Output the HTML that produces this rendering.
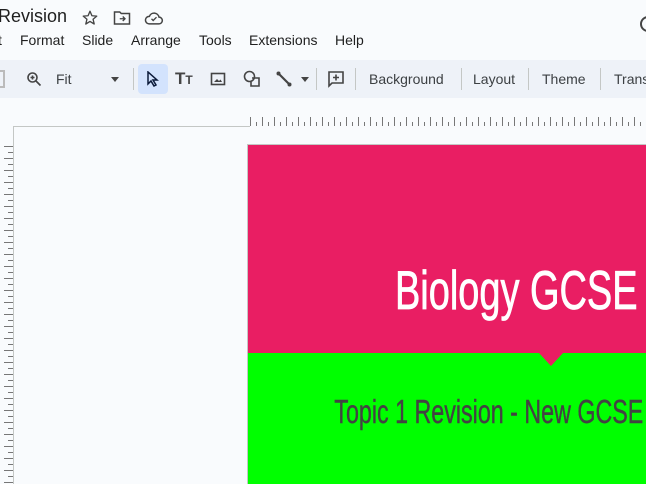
<!DOCTYPE html>
<html><head><style>
*{margin:0;padding:0;box-sizing:border-box}
body{width:646px;height:484px;overflow:hidden;background:#f9fbfd;font-family:"Liberation Sans",sans-serif;position:relative;color:#1f1f1f}
.a{position:absolute;white-space:nowrap}
.menu{font-size:14px;top:32px}
.tb{position:absolute;top:60px;left:0;width:646px;height:38px;background:#eef2f8}
.tl{font-size:14px;top:71px;color:#3c4043}
.sep{position:absolute;top:68px;width:1px;height:22px;background:#c4c7c5}
</style></head><body>
<div class="a" style="left:-2px;top:6px;font-size:18px;">Revision</div>
<svg class="a" style="left:81px;top:9px" width="18" height="18" viewBox="0 0 24 24"><path d="M12 3l2.6 6 6.4.5-4.9 4.2 1.5 6.3L12 16.6 6.4 20l1.5-6.3L3 9.5l6.4-.5z" fill="none" stroke="#444" stroke-width="1.8" stroke-linejoin="round"/></svg>
<svg class="a" style="left:113px;top:10px" width="18" height="16" viewBox="0 0 24 20"><path d="M2 2h7l2 2h11v14H2z" fill="none" stroke="#444" stroke-width="2"/><path d="M9 11h7M13 8l3 3-3 3" fill="none" stroke="#444" stroke-width="1.8"/></svg>
<svg class="a" style="left:144px;top:10px" width="20" height="16" viewBox="0 0 24 18"><path d="M6 16h12a4 4 0 0 0 0-8 6 6 0 0 0-11.5-1A4.5 4.5 0 0 0 6 16z" fill="none" stroke="#444" stroke-width="1.8"/><path d="M9 10l2 2 4-4" fill="none" stroke="#444" stroke-width="1.6"/></svg>
<svg class="a" style="left:638px;top:14px" width="12" height="20" viewBox="0 0 12 20"><path d="M10 3A7 7 0 1 0 10 17" fill="none" stroke="#444" stroke-width="2"/></svg>
<div class="a menu" style="left:-2px">t</div>
<div class="a menu" style="left:20px">Format</div>
<div class="a menu" style="left:82px">Slide</div>
<div class="a menu" style="left:131px">Arrange</div>
<div class="a menu" style="left:199px">Tools</div>
<div class="a menu" style="left:249px">Extensions</div>
<div class="a menu" style="left:335px">Help</div>
<div class="tb"></div>
<div class="a" style="left:0;top:70px;width:5px;height:18px;border:2px solid #bbb;border-left:none"></div>
<svg class="a" style="left:26px;top:71px" width="16" height="16" viewBox="0 0 16 16"><circle cx="6.5" cy="6.5" r="4.5" fill="none" stroke="#444" stroke-width="1.6"/><path d="M10 10l4.5 4.5M6.5 4.5v4M4.5 6.5h4" stroke="#444" stroke-width="1.6"/></svg>
<div class="a tl" style="left:56px">Fit</div>
<div class="a" style="left:111px;top:77px;border:4px solid transparent;border-top:5px solid #444"></div>
<div class="sep" style="left:133px"></div>
<div class="a" style="left:138px;top:64px;width:30px;height:30px;background:#d3e3fd;border-radius:4px"></div>
<svg class="a" style="left:145px;top:71px" width="16" height="16" viewBox="0 0 16 16"><path d="M3 1v12l3-3 3 5 2-1-3-5h4z" fill="none" stroke="#0b1a3a" stroke-width="1.5"/></svg>
<div class="a" style="left:175px;top:69px;font-size:17px;font-weight:bold;color:#444">T<span style="font-size:12px">T</span></div>
<svg class="a" style="left:210px;top:71px" width="16" height="16" viewBox="0 0 16 16"><rect x="1.5" y="2.5" width="13" height="11" fill="none" stroke="#444" stroke-width="1.6"/><path d="M4 11l3-3 2 2 1.5-1.5L12 11z" fill="#444"/></svg>
<svg class="a" style="left:243px;top:70px" width="18" height="18" viewBox="0 0 18 18"><circle cx="6.5" cy="6.5" r="5" fill="none" stroke="#444" stroke-width="1.6"/><path d="M9 8h7v8H8v-4" fill="none" stroke="#444" stroke-width="1.6"/></svg>
<svg class="a" style="left:276px;top:71px" width="16" height="16" viewBox="0 0 16 16"><path d="M2 2l12 12" stroke="#444" stroke-width="2.2"/><circle cx="2.5" cy="2.5" r="2" fill="#444"/><circle cx="13.5" cy="13.5" r="2" fill="#444"/></svg>
<div class="a" style="left:301px;top:77px;border:4px solid transparent;border-top:5px solid #444"></div>
<div class="sep" style="left:316px"></div>
<svg class="a" style="left:327px;top:70px" width="18" height="18" viewBox="0 0 18 18"><path d="M2 2h14v11H5l-3 3z" fill="none" stroke="#444" stroke-width="1.6"/><path d="M9 4.5v6M6 7.5h6" stroke="#444" stroke-width="1.6"/></svg>
<div class="sep" style="left:355px"></div>
<div class="a tl" style="left:369px">Background</div>
<div class="sep" style="left:461px"></div>
<div class="a tl" style="left:473px">Layout</div>
<div class="sep" style="left:528px"></div>
<div class="a tl" style="left:542px">Theme</div>
<div class="sep" style="left:600px"></div>
<div class="a tl" style="left:614px">Trans</div>
<div class="a" style="left:250px;top:117px;width:396px;height:9px;background:repeating-linear-gradient(90deg,#777 0 1px,transparent 1px 6px) bottom/100% 4px no-repeat,repeating-linear-gradient(90deg,#777 0 1px,transparent 1px 12px) bottom/100% 9px no-repeat"></div>
<div class="a" style="left:13px;top:126px;width:237px;height:1px;background:#c4c7c5"></div>
<div class="a" style="left:13px;top:126px;width:1px;height:358px;background:#c4c7c5"></div>
<div class="a" style="left:4px;top:146px;width:9px;height:338px;background:repeating-linear-gradient(180deg,#777 0 1px,transparent 1px 6px) right/5px 100% no-repeat,repeating-linear-gradient(180deg,#777 0 1px,transparent 1px 12px) right/9px 100% no-repeat"></div>
<div class="a" style="left:247px;top:144px;width:399px;height:340px;background:#00ff00;border-left:1px solid #c4c7c5"></div>
<div class="a" style="left:248px;top:144px;width:398px;height:209px;background:#e91e63;border-top:1px solid #c4c7c5"></div>
<div class="a" style="left:539px;top:353px;border:12px solid transparent;border-top:13px solid #e91e63;border-bottom:0"></div>
<div class="a" style="right:8px;top:258px;font-size:55px;color:#fff;-webkit-text-stroke:0.8px #fff;transform:scaleX(0.69);transform-origin:right top">Biology GCSE</div>
<div class="a" style="right:3px;top:393px;font-size:33px;color:#434343;-webkit-text-stroke:0.4px #434343;transform:scaleX(0.705);transform-origin:right top">Topic 1 Revision - New GCSE</div>
</body></html>
